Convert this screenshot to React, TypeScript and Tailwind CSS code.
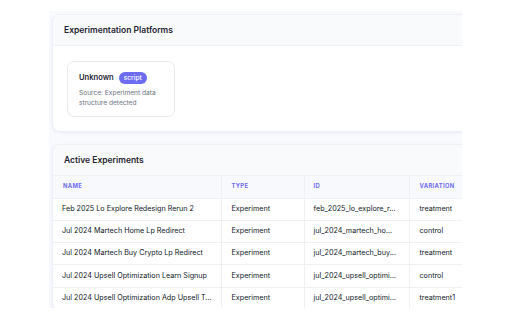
import React from "react";

const rows = [
  ["Feb 2025 Lo Explore Redesign Rerun 2", "Experiment", "feb_2025_lo_explore_r...", "treatment"],
  ["Jul 2024 Martech Home Lp Redirect", "Experiment", "jul_2024_martech_ho...", "control"],
  ["Jul 2024 Martech Buy Crypto Lp Redirect", "Experiment", "jul_2024_martech_buy...", "treatment"],
  ["Jul 2024 Upsell Optimization Learn Signup", "Experiment", "jul_2024_upsell_optimi...", "control"],
  ["Jul 2024 Upsell Optimization Adp Upsell T...", "Experiment", "jul_2024_upsell_optimi...", "treatment1"],
];

export default function App() {
  return (
    <div
      className="w-[512px] h-[320px] bg-white overflow-hidden"
      style={{ fontFamily: "Inter, 'Noto Sans', sans-serif" }}
    >
      <div className="ml-[49px] mt-[11px] w-[413px] h-[297px] bg-[#f9fafd] overflow-hidden pl-[3px] pt-[3px]">
        <div className="w-[440px] flex flex-col gap-[12px]">
          {/* Card 1 */}
          <div className="bg-white rounded-[8px] border border-[#eef0f6] shadow-[0_1px_3px_rgba(99,102,241,0.1)] overflow-hidden">
            <div className="h-[31px] bg-[#f9fafb] border-b border-[#eef0f4] flex items-center pl-[11px]">
              <span className="text-[8.5px] font-semibold text-[#1f2433]">Experimentation Platforms</span>
            </div>
            <div className="pt-[15px] pl-[14px] pb-[14px]">
              <div className="w-[108px] h-[56px] rounded-[7px] border border-[#e8eaf0] bg-white pl-[11px] pt-[10px]">
                <div className="flex items-center gap-[5px]">
                  <span className="text-[7.6px] font-semibold text-[#1f2433]">Unknown</span>
                  <span className="h-[12px] px-[5px] rounded-full bg-[#6e6cf2] text-white text-[6.6px] font-medium flex items-center leading-none">script</span>
                </div>
                <div className="mt-[4px] text-[6.6px] leading-[10px] text-[#6b7280]">
                  Source: Experiment data
                  <br />
                  structure detected
                </div>
              </div>
            </div>
          </div>
          {/* Card 2 */}
          <div className="bg-white rounded-[8px] border border-[#eef0f6] shadow-[0_1px_3px_rgba(99,102,241,0.1)] overflow-hidden">
            <div className="h-[31px] bg-[#f9fafb] border-b border-[#eef0f4] flex items-center pl-[11px]">
              <span className="text-[8.5px] font-semibold text-[#1f2433]">Active Experiments</span>
            </div>
            <table className="border-collapse text-left">
              <thead>
                <tr className="h-[22px] bg-[#f8f9fc] border-b border-[#eef0f4]">
                  <th className="w-[168px] pl-[10px] text-[5.8px] font-bold tracking-[0.06em] text-[#6d6cf3]">NAME</th>
                  <th className="w-[83px] pl-[10px] border-l border-[#eef0f4] text-[5.8px] font-bold tracking-[0.06em] text-[#6d6cf3]">TYPE</th>
                  <th className="w-[105px] pl-[9px] border-l border-[#eef0f4] text-[5.8px] font-bold tracking-[0.06em] text-[#6d6cf3]">ID</th>
                  <th className="w-[80px] pl-[10px] border-l border-[#eef0f4] text-[5.8px] font-bold tracking-[0.06em] text-[#6d6cf3]">VARIATION</th>
                </tr>
              </thead>
              <tbody>
                {rows.map((r, i) => (
                  <tr key={i} className="h-[22.3px] border-b border-[#eef0f4]">
                    <td className="pl-[9px] text-[7.2px] text-[#111827] whitespace-nowrap">{r[0]}</td>
                    <td className="pl-[10px] border-l border-[#eef0f4] text-[7.2px] text-[#111827] whitespace-nowrap">{r[1]}</td>
                    <td className="pl-[9px] border-l border-[#eef0f4] text-[7.2px] text-[#111827] whitespace-nowrap">{r[2]}</td>
                    <td className="pl-[10px] border-l border-[#eef0f4] text-[7.2px] text-[#111827] whitespace-nowrap">{r[3]}</td>
                  </tr>
                ))}
              </tbody>
            </table>
          </div>
        </div>
      </div>
    </div>
  );
}
